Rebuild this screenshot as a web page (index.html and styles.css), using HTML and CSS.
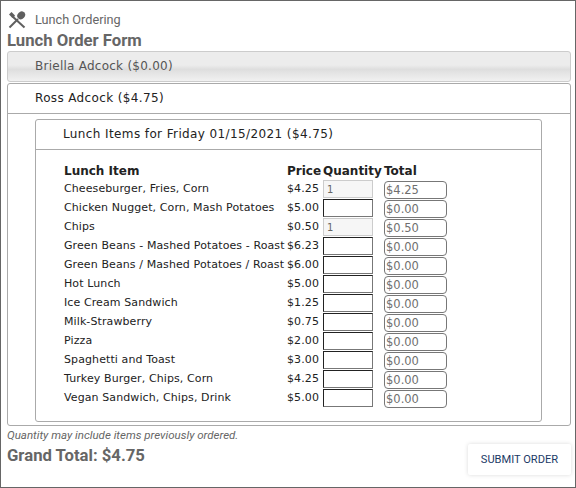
FILE: index.html
```html
<!DOCTYPE html>
<html lang="en">
<head>
    <meta charset="UTF-8">
    <title>Lunch Ordering</title>
    <link rel="stylesheet" href="styles.css">
</head>
<body>
    <div class="page">
        <div class="module-title">
            <svg class="module-icon" viewBox="0 0 18 18" width="18" height="18">
                <path d="M1 3.5 L3.5 1 L7 4.5 L5.5 7 L4 6.5 Z" fill="#5f5f5f"/>
                <path d="M4 5 L16.5 16.5" stroke="#5f5f5f" stroke-width="2" fill="none"/>
                <path d="M1.5 16.5 L10 8" stroke="#5f5f5f" stroke-width="2" fill="none"/>
                <ellipse cx="13.2" cy="4.4" rx="3.6" ry="4.2" transform="rotate(42 13.2 4.4)" fill="#5f5f5f"/>
            </svg>
            <span>Lunch Ordering</span>
        </div>
        <h1 class="form-title">Lunch Order Form</h1>

        <div class="panel-head closed">Briella Adcock ($0.00)</div>

        <div class="panel">
            <div class="panel-head">Ross Adcock ($4.75)</div>
            <div class="panel-body">
                <div class="panel inner">
                    <div class="panel-head">Lunch Items for Friday 01/15/2021 ($4.75)</div>
                    <div class="inner-body">
                        <table class="items">
                            <thead>
                                <tr>
                                    <th class="col-item">Lunch Item</th>
                                    <th class="col-price">Price</th>
                                    <th class="col-qty">Quantity</th>
                                    <th class="col-total">Total</th>
                                </tr>
                            </thead>
                            <tbody id="item-rows"></tbody>
                        </table>
                    </div>
                </div>
            </div>
        </div>

        <p class="note">Quantity may include items previously ordered.</p>
        <div class="footer">
            <div class="grand-total">Grand Total: $4.75</div>
            <button class="submit" type="button">SUBMIT ORDER</button>
        </div>
    </div>

    <script>
        const items = [
            ["Cheeseburger, Fries, Corn", "$4.25", "1", "$4.25"],
            ["Chicken Nugget, Corn, Mash Potatoes", "$5.00", "", "$0.00"],
            ["Chips", "$0.50", "1", "$0.50"],
            ["Green Beans - Mashed Potatoes - Roast", "$6.23", "", "$0.00"],
            ["Green Beans / Mashed Potatoes / Roast", "$6.00", "", "$0.00"],
            ["Hot Lunch", "$5.00", "", "$0.00"],
            ["Ice Cream Sandwich", "$1.25", "", "$0.00"],
            ["Milk-Strawberry", "$0.75", "", "$0.00"],
            ["Pizza", "$2.00", "", "$0.00"],
            ["Spaghetti and Toast", "$3.00", "", "$0.00"],
            ["Turkey Burger, Chips, Corn", "$4.25", "", "$0.00"],
            ["Vegan Sandwich, Chips, Drink", "$5.00", "", "$0.00"]
        ];

        const rows = document.getElementById("item-rows");

        items.forEach((item) => {
            const row = document.createElement("tr");
            const qtyClass = item[2] ? "qty filled" : "qty";
            row.innerHTML = `
                <td class="col-item">${item[0]}</td>
                <td class="col-price">${item[1]}</td>
                <td class="col-qty"><input class="${qtyClass}" type="text" value="${item[2]}"></td>
                <td class="col-total"><input class="line-total" type="text" value="${item[3]}"></td>
            `;
            rows.appendChild(row);
        });
    </script>
</body>
</html>
```

FILE: styles.css
```css
* {
    box-sizing: border-box;
    margin: 0;
    padding: 0;
}

html, body {
    height: 100%;
}

body {
    background-color: #fff;
    font-family: "DejaVu Sans", Verdana, sans-serif;
    font-size: 11px;
    color: #222;
    overflow: hidden;
}

.page {
    height: 488px;
    border: 1px solid #666;
    padding: 10px 4px 0 6px;
}

.module-title {
    display: flex;
    align-items: center;
    height: 17px;
    padding-left: 1px;
    font-family: Roboto, sans-serif;
    font-size: 12.7px;
    color: #666;
}

.module-icon {
    margin-right: 9px;
}

.form-title {
    margin-top: 2px;
    height: 21px;
    font-family: Roboto, sans-serif;
    font-size: 16.7px;
    font-weight: 700;
    line-height: 21px;
    color: #666;
}

.panel {
    border: 1px solid #aaa;
    border-radius: 3px;
}

.panel-head {
    height: 30px;
    padding-left: 27px;
    font-size: 12px;
    line-height: 29px;
    letter-spacing: 0.36px;
    border-bottom: 1px solid #aaa;
    color: #222;
}

.inner .panel-head {
    letter-spacing: 0.39px;
}

.panel-head.closed {
    height: 31px;
    margin-bottom: 1px;
    padding-left: 27px;
    border: 1px solid #ccc;
    border-radius: 3px;
    letter-spacing: 0.25px;
    color: #555;
    background: linear-gradient(to bottom, #ececec 0%, #ececec 45%, #dedede 60%, #f1f1f1 100%);
}

.panel-body {
    padding: 5px 28px 3px 27px;
}

.inner-body {
    height: 271px;
    padding: 12px 0 0 27px;
}

.items {
    border-collapse: collapse;
}

.items th {
    height: 18px;
    font-size: 12px;
    text-align: left;
    color: #222;
}

.items td {
    height: 19px;
    color: #222;
    vertical-align: top;
    line-height: 14px;
    letter-spacing: 0.1px;
    padding-top: 2px;
}

.items td.col-qty,
.items td.col-total {
    padding-top: 0;
}

.col-item {
    width: 224px;
    padding-left: 1px;
}

.col-price {
    width: 36px;
}

.col-qty {
    width: 61px;
}

.col-total {
    width: 63px;
}

.qty {
    display: block;
    width: 50px;
    height: 18px;
    padding-left: 3px;
    border: 1px solid;
    border-color: #222 #777 #777 #222;
    background-color: #fff;
    font-family: "DejaVu Sans", Verdana, sans-serif;
    font-size: 10px;
    color: #666;
}

.qty.filled {
    border-color: #ccc;
    background-color: #f6f6f6;
}

.line-total {
    display: block;
    width: 63px;
    height: 18px;
    margin-top: 1px;
    padding-left: 1px;
    border: 1px solid #777;
    border-radius: 4px;
    background-color: #fff;
    font-family: "DejaVu Sans", Verdana, sans-serif;
    font-size: 11.5px;
    color: #6f6f6f;
}

.note {
    margin-top: 2px;
    height: 15px;
    font-family: Roboto, sans-serif;
    font-size: 11.5px;
    font-style: italic;
    line-height: 15px;
    color: #666;
}

.footer {
    display: flex;
    align-items: flex-start;
    justify-content: space-between;
    margin-top: 1px;
}

.grand-total {
    margin-top: 2px;
    font-family: Roboto, sans-serif;
    font-size: 16.7px;
    font-weight: 700;
    color: #666;
}

.submit {
    width: 103px;
    height: 31px;
    border: none;
    border-radius: 2px;
    background-color: #fff;
    box-shadow: 0 0 4px rgba(0, 0, 0, 0.15);
    font-family: Roboto, sans-serif;
    font-size: 11.1px;
    color: #1b3a66;
}
```
